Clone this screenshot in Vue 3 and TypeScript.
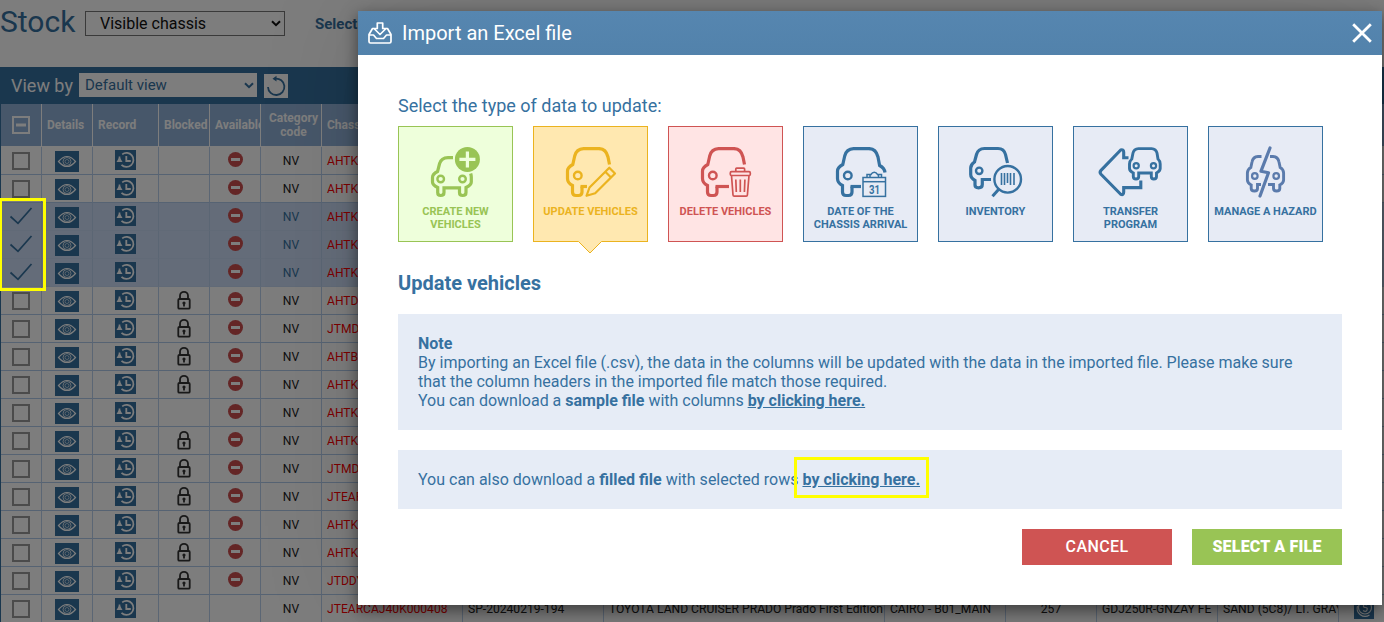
<script setup lang="ts">
interface Row { chassis: string; locked: boolean; selected?: boolean; closed: boolean; details: string[] }

const row = (chassis: string, locked = false, selected = false, closed = true, details: string[] = ['', '', '', '', '', '']): Row =>
  ({ chassis, locked, selected, closed, details })

const rows: Row[] = [
  row('AHTKB'), row('AHTKB'),
  row('AHTKB', false, true), row('AHTKB', false, true), row('AHTKB', false, true),
  row('AHTDB', true), row('JTMDB', true), row('AHTBB', true), row('AHTKB', true),
  row('AHTKB'), row('AHTKB', true), row('JTMDB', true), row('JTEAR', true),
  row('AHTKB', true), row('AHTKB', true), row('JTDDY', true),
  row('JTEARCAJ40K000408', false, false, false, [
    'SP-20240219-194', 'TOYOTA LAND CRUISER PRADO Prado First Edition', 'CAIRO - B01_MAIN',
    '257', 'GDJ250R-GNZAY FE', 'SAND (5C8)/ LT. GRAY',
  ]),
]

interface Card { id: string; label: string; tone: string }
const cards: Card[] = [
  { id: 'create', label: 'CREATE NEW VEHICLES', tone: 'green' },
  { id: 'update', label: 'UPDATE VEHICLES', tone: 'amber' },
  { id: 'delete', label: 'DELETE VEHICLES', tone: 'red' },
  { id: 'date', label: 'DATE OF THE CHASSIS ARRIVAL', tone: 'blue' },
  { id: 'inventory', label: 'INVENTORY', tone: 'blue' },
  { id: 'transfer', label: 'TRANSFER PROGRAM', tone: 'blue' },
  { id: 'hazard', label: 'MANAGE A HAZARD', tone: 'blue' },
]
</script>

<template>
  <div class="screen">
    <div class="page">
      <header class="top">
        <h1>Stock</h1>
        <div class="select visible-select">
          <span>Visible chassis</span>
          <svg width="10" height="7" viewBox="0 0 10 7"><path d="M1 1.2 5 5.2 9 1.2" fill="none" stroke="currentColor" stroke-width="2" /></svg>
        </div>
        <b class="top-label">Select</b>
      </header>
      <div class="viewbar">
        <span class="view-label">View by</span>
        <div class="select view-select">
          <span>Default view</span>
          <svg width="10" height="7" viewBox="0 0 10 7"><path d="M1 1.2 5 5.2 9 1.2" fill="none" stroke="currentColor" stroke-width="2" /></svg>
        </div>
        <div class="reset">
          <svg width="24" height="24" viewBox="0 0 24 24" fill="none" stroke="#3671a0" stroke-width="1.8">
            <path d="M11 4.7A8.2 8.2 0 1 1 4 13" /><path d="M12.5 1.8 8.5 4.8l4 2.8z" fill="#3671a0" stroke="none" />
          </svg>
        </div>
      </div>
      <div class="table">
        <div class="tr head">
          <div class="td center">
            <svg width="18" height="18" viewBox="0 0 18 18"><path d="M1 1h16v16H1z" fill="none" stroke="#fff" stroke-width="2" /><path d="M4 9h10" stroke="#fff" stroke-width="3" /></svg>
          </div>
          <div class="td">Details</div>
          <div class="td">Record</div>
          <div class="td">Blocked</div>
          <div class="td">Available</div>
          <div class="td center">Category code</div>
          <div class="td">Chassis</div>
          <div class="td" v-for="n in 7" :key="n"></div>
        </div>
        <div v-for="(r, i) in rows" :key="i" class="tr" :class="{ selected: r.selected }">
          <div class="td center">
            <svg v-if="r.selected" class="check" width="24" height="20" viewBox="0 0 24 20"><path d="M1.5 10.5 9 17.3 22.5 2" fill="none" stroke="#3671a0" stroke-width="1.7" /></svg>
            <i v-else class="box"></i>
          </div>
          <div class="td center">
            <svg class="eye" width="24" height="21" viewBox="0 0 24 21" fill="none" stroke="#fff">
              <path d="M0 0h24v21H0z" fill="#3671a0" stroke="none" />
              <path d="M3.5 10.5Q12 .5 20.5 10.5 12 20.5 3.5 10.5z" stroke-width="1.2" />
              <circle cx="12" cy="10.5" r="4" stroke-width=".8" /><circle cx="12" cy="10.5" r="2" stroke-width=".6" />
            </svg>
          </div>
          <div class="td center">
            <svg class="record" width="21" height="20" viewBox="0 0 21 20" fill="none" stroke="#fff">
              <path d="M0 0h21v20H0z" fill="#3671a0" stroke="none" />
              <path d="M7.2 4.3A7 7 0 1 1 6.5 14.8M4.5 6.5v5" stroke-width="1.7" />
              <path d="M1.500 12 4.500 7 7.500 12z" fill="#fff" stroke="none" />
              <path d="M11.3 6v5h4.5" stroke-width="1.8" />
            </svg>
          </div>
          <div class="td center">
            <svg v-if="r.locked" class="lock" width="14" height="19" viewBox="0 0 14 19" fill="none" stroke="#333" stroke-width="1.8">
              <path d="M3 8V4.7a4 3.8 0 0 1 8 0V8" /><rect x="1.3" y="8" width="11.4" height="9.7" rx="1" />
              <circle cx="7" cy="12" r="1.6" fill="#333" stroke="none" /><path d="M7 12v3.5" />
            </svg>
          </div>
          <div class="td center">
            <svg v-if="r.closed" class="closed" width="15" height="15" viewBox="0 0 15 15"><circle cx="7.5" cy="7.5" r="7.5" fill="#cc4f4f" /><path d="M3 7.5h9" stroke="#fff" stroke-width="3" /></svg>
          </div>
          <div class="td center nv">NV</div>
          <div class="td chassis">{{ r.chassis }}</div>
          <div v-for="(d, k) in r.details" :key="k" class="td" :class="{ center: k === 3 }">{{ d }}</div>
          <div class="td last">
            <svg width="20" height="20" viewBox="0 0 20 20" fill="none" stroke="#fff" stroke-width="1.2">
              <path d="M0 0h20v20H0z" fill="#3671a0" stroke="none" /><circle cx="11" cy="8.5" r="6.5" /><path d="M3.5 7a8 8 0 0 0 12 9M13 6q-3-1.5-3.5.5t2 2 1.5 2.5-4 .5" />
            </svg>
          </div>
        </div>
      </div>
    </div>

    <div class="overlay"></div>

    <section class="modal">
      <header class="modal-head">
        <svg width="26" height="24" viewBox="0 0 26 24" fill="none" stroke="#fff" stroke-width="1.7" stroke-linejoin="round">
          <path d="M7 7.5H5.500L2 13.500V20.500Q2 22 3.500 22H22.500Q24 22 24 20.500V13.500L20.500 7.500H19" />
          <path d="M2 14H6.500L9.500 17.500H16.500L19.500 14H24" />
          <path d="M10.300 2h5.400v5.500h3.300L13 13.500 7 7.500h3.300z" />
        </svg>
        <h2>Import an Excel file</h2>
        <svg class="close" width="20" height="20" viewBox="0 0 20 20"><path d="M1.200 1.200 18.800 18.800M18.800 1.200 1.200 18.800" stroke="#fff" stroke-width="2.800" /></svg>
      </header>
      <div class="modal-body">
        <p class="lead">Select the type of data to update:</p>
        <div class="cards">
          <div v-for="c in cards" :key="c.id" class="card" :class="c.tone">
            <svg class="art" width="115" height="76" viewBox="0 0 115 76" fill="none" stroke="currentColor" stroke-width="3.200">
              <g v-if="c.id === 'create'">
                <path d="M55 31.600H50Q43.300 31.800 41.600 37.500L39.600 45.500Q34.500 48 34.500 51.500V56Q34.500 59 39.700 61.500V66.500Q39.700 69.500 42.700 69.500 46 69.500 46 66.500V61.800H61.500V66.500Q61.500 69.500 64.700 69.500 68 69.500 68 66.500V61.500Q73.300 59 73.300 56V51Q73.300 49.500 72.700 47.500" />
                <circle cx="42.700" cy="53" r="3.300" stroke-width="2.400" /><circle cx="64.500" cy="53" r="3.300" stroke-width="2.400" />
                <circle cx="69.400" cy="33.400" r="12.500" fill="currentColor" stroke="none" />
                <path class="plus" d="M61.400 33.400h16M69.400 25.400v16" />
              </g>
              <g v-else-if="c.id === 'update' || c.id === 'delete' || c.id === 'date'">
                <path v-if="c.id === 'date'" d="M82 46.500Q81.500 42 76.600 39.500L75 31Q73 22.800 66.500 22.600" />
                <path v-else d="M76.500 38.500 75 31Q73 22.800 66.500 22.600" />
                <path d="M67 22.600H50.500Q43.500 22.800 41.700 30L39.800 38.500Q34.500 41.500 34.500 45V52.500Q34.500 57 39.500 59.500V66Q39.500 69.500 43 69.500H45.500Q49 69.500 49 66V60.500" />
                <path :d="c.id === 'update' ? 'M47.500 60.500H54' : c.id === 'delete' ? 'M47.500 60.500H61' : 'M47.500 60.500H58'" />
                <circle cx="44.800" cy="49.500" r="3.800" stroke-width="2.400" />
                <g v-if="c.id === 'update'" stroke-width="2.200" stroke-linejoin="round">
                  <path d="M53.500 69.800 56.500 61.500 76.300 41.700 82 47.500 62.200 67.300z" /><path d="M72.300 45.700 78 51.500" />
                </g>
                <g v-if="c.id === 'delete'" stroke-width="1.700">
                  <path d="M63.500 49.500 65 69q.1 1.100 1.200 1.100h12q1.100 0 1.200-1.100l1.600-19.500" /><rect x="62.300" y="45.700" width="20" height="3.800" rx="1.200" />
                  <path d="M67.800 45.500V43q0-.8.900-.8h7q.9 0 .9.800v2.500M67.800 53.500l.5 12.500M72.300 53.500V66M76.900 53.500 76.400 66" />
                </g>
                <g v-if="c.id === 'date'" stroke-width="1.500">
                  <rect x="60" y="51.500" width="22.500" height="18.900" /><path d="M60 55.700h22.500" /><path d="M64 51v-2.500h3V51M75.500 51v-2.500h3V51M67.500 49Q71.300 43.500 75 49" />
                  <text x="66" y="67.800" textLength="11" lengthAdjust="spacingAndGlyphs">31</text>
                </g>
              </g>
              <g v-else-if="c.id === 'inventory'">
                <path d="M69.500 37 67.500 28.500Q66 22.600 60 22.500H46.500Q40 22.700 38.500 28.500L36.500 36Q32.700 38.500 32.700 42V48.500Q32.700 52 37 54.500V59Q37 61.800 40.600 61.800 44.300 61.800 44.300 58.500V53.500H53" />
                <circle cx="41.200" cy="44.800" r="3.200" stroke-width="2.400" />
                <circle cx="69.700" cy="53.300" r="13.300" stroke-width="2.400" /><path d="M61 63 54.500 70.300" stroke-width="3" />
                <path d="M63.500 47v12M66.500 47v12M69.500 47v10M72.500 47v12M76 47v12" stroke-width="1.600" />
              </g>
              <g v-else-if="c.id === 'transfer'">
                <path d="M55.500 31.700H50.700V26Q50.500 23 47.700 24L28 44.300Q26.200 46.300 28 48.300L47.700 68.300Q50.700 69.500 50.700 66V61.600H67.800V54.500" stroke-width="3.100" />
                <path d="M65.500 22.600H78.500Q83 22.800 84 27L85 33Q87.200 35 87.200 38V42.500Q87.200 45 83.500 47V50.500Q83.500 53 80.800 53 78.300 53 78.300 50.500V47H65.700V50.500Q65.700 53 63 53 60.300 53 60.300 50.500V47Q56.500 45 56.500 42.500V38Q56.500 35 58.800 33L60 27Q61 22.800 65.500 22.600z" stroke-width="2.900" />
                <circle cx="63.200" cy="39.700" r="2.600" stroke-width="2.200" /><circle cx="80.500" cy="39.700" r="2.600" stroke-width="2.200" />
              </g>
              <g v-else class="hazard" stroke-width="2.900">
                <path d="M53.500 30.500H50Q45 30.800 44 36L42.800 41.500Q39.400 43.500 39.400 47V54Q39.400 57 43.200 59V62.500Q43.200 65 46.500 65 49.500 65 49.500 62.500V58.500H53M62 30.500H65Q70 30.800 71 36L72.200 41.500Q75.600 43.500 75.600 47V54Q75.600 57 71.800 59V62.500Q71.800 65 68.600 65 65.500 65 65.500 62.500V58.500H60" />
                <path d="M62 22 53 45.200 60.500 46.800 52 70" stroke-width="3.200" stroke-linecap="round" stroke-linejoin="round" />
                <circle cx="46.800" cy="50" r="2.800" stroke-width="2.200" /><circle cx="68.200" cy="50" r="2.800" stroke-width="2.200" />
              </g>
            </svg>
            <span class="card-label">{{ c.label }}</span>
            <svg v-if="c.id === 'update'" class="notch" width="24" height="13" viewBox="0 0 24 13"><path d="M0 0H24L12 12z" fill="#ffe8b0" /><path d="M.5 .5 12 12 23.500 .5" fill="none" stroke="#ebb31f" /></svg>
          </div>
        </div>
        <h3>Update vehicles</h3>
        <div class="note">
          <b>Note</b><br>
          By importing an Excel file (.csv), the data in the columns will be updated with the data in the imported file. Please make sure that the column headers in the imported file match those required.<br>
          You can download a <b>sample file</b> with columns <a>by clicking here.</a>
        </div>
        <div class="note">
          You can also download a <b>filled file</b> with selected rows <a class="marked">by clicking here.</a>
        </div>
        <div class="actions">
          <button class="cancel">CANCEL</button>
          <button class="choose">SELECT A FILE</button>
        </div>
      </div>
    </section>
    <div class="mark"></div>
  </div>
</template>

<style>
body { overflow: hidden; }
</style>

<style scoped>
.screen { position: relative; width: 1384px; height: 622px; overflow: hidden; font-family: Roboto, "Liberation Sans", sans-serif; color: #3671a0; background: #fff; }
.screen * { box-sizing: border-box; }
svg { display: block; flex: none; }
.top { height: 67px; display: flex; align-items: flex-start; }
h1 { margin: 4px 0 0; width: 85px; font-size: 30px; line-height: 36px; font-weight: 400; white-space: nowrap; }
.select { display: flex; align-items: center; justify-content: space-between; font-size: 16px; background: #fff; }
.visible-select { width: 200px; height: 25px; margin-top: 11px; padding: 0 3px 0 14px; border: 1px solid #777; color: #111; }
.top-label { margin: 15px 0 0 30px; font-size: 15px; line-height: 19px; }
.viewbar { height: 37px; display: flex; align-items: center; background: #3671a0; color: #fff; }
.view-label { width: 79px; padding-left: 11px; font-size: 18px; white-space: nowrap; }
.view-select { width: 178px; height: 24px; margin-top: -1px; padding: 0 3px 0 6px; color: #3671a0; font-size: 15px; }
.reset { width: 24px; height: 24px; margin-left: 7px; background: #fff; }
.table { border-left: 1px solid #3671a0; width: 1400px; }
.tr { display: grid; grid-template-columns: 41px 51px 66px 51px 51px 61px 141px 141px 281px 121px 91px 121px 121px 62px; height: 28px; color: #222; font-size: 12.1px; }
.td { display: flex; align-items: center; padding-left: 5px; border-right: 1px solid #b9d0ec; border-bottom: 1px solid #b0cbea; white-space: nowrap; overflow: hidden; }
.center { justify-content: center; padding: 0; text-align: center; }
.head { height: 43px; background: #91b1d8; color: #fff; font-size: 12px; font-weight: 700; line-height: 14px; }
.head .td { border-right-color: #fff; border-bottom-color: #fff; }
.head .center { white-space: normal; padding-left: 5px; }
.head .center:first-child { padding: 0; }
.selected { background: #ccdcf6; }
.selected .td { border-bottom-color: #c7d8f2; }
.selected .nv { color: #3671a0; }
.chassis { color: #f00; }
.check { margin-top: -1px; }
.box { width: 18px; height: 18px; border: 2px solid #9a9a9a; }
.eye { margin-top: 2px; }
.record { margin: -1px 1px 0 0; }
.lock { margin-top: -1px; }
.closed { margin-top: -3px; }
.last { padding-left: 15px; }
.overlay { position: absolute; inset: 0; background: rgba(0, 0, 0, .51); }
.modal { position: absolute; left: 358px; top: 11px; width: 1024px; height: 594px; background: #fff; box-shadow: 0 5px 15px rgba(0, 0, 0, .5), 0 0 100px rgba(0, 0, 0, .1); }
.modal-head { height: 44px; padding: 0 10px 0 9px; display: flex; align-items: center; background: linear-gradient(#5686b0, #5282ab); color: #fff; }
.modal-head h2 { margin: 0 0 0 9px; font-size: 20px; font-weight: 400; }
.close { margin-left: auto; }
.modal-body { padding: 40px; }
.lead { margin: 0; height: 31px; font-size: 18px; line-height: 22px; }
.cards { display: flex; gap: 20px; }
.card { position: relative; width: 115px; height: 116px; box-shadow: inset 0 0 0 1px currentColor; text-align: center; font-size: 11px; line-height: 13px; font-weight: 700; }
.art { height: 76px; margin-bottom: 3px; }
.art text { font: 700 13px Roboto, sans-serif; fill: currentColor; stroke: none; }
.card-label { display: block; padding: 0 5px; }
.green .card-label { padding: 0 20px; }
.green { color: #99c455; background: #eeffdb; }
.plus { stroke: #eeffdb; }
.amber { color: #ebb31f; background: #ffe8b0; }
.red { color: #cf5453; background: #ffe4e4; }
.blue { color: #3671a0; background: #e7ebf5; }
.hazard { color: #5b7bac; stroke: #5b7bac; }
.notch { position: absolute; left: 45px; top: 115px; }
h3 { margin: 29px 0 19px; font-size: 20px; line-height: 24px; font-weight: 700; }
.note { padding: 20px; margin-bottom: 20px; background: #e6ecf6; font-size: 16px; line-height: 19px; }
.note a { font-weight: 700; text-decoration: underline; }
.marked { position: relative; }
.marked::before { content: ""; box-sizing: border-box; position: absolute; left: -8px; top: -13px; width: 135px; height: 41px; border: 3px solid #ff0; }
.actions { display: flex; justify-content: flex-end; gap: 20px; }
.actions button { width: 150px; height: 36px; padding: 0 0 2px; border: 0; color: #fff; font-family: inherit; font-size: 16px; }
.cancel { background: #cf5453; font-weight: 500; letter-spacing: .4px; }
.choose { background: #99c455; font-weight: 900; letter-spacing: .2px; }
.mark { position: absolute; left: -1px; top: 198px; width: 47px; height: 93px; border: 3px solid #ff0; }
</style>
